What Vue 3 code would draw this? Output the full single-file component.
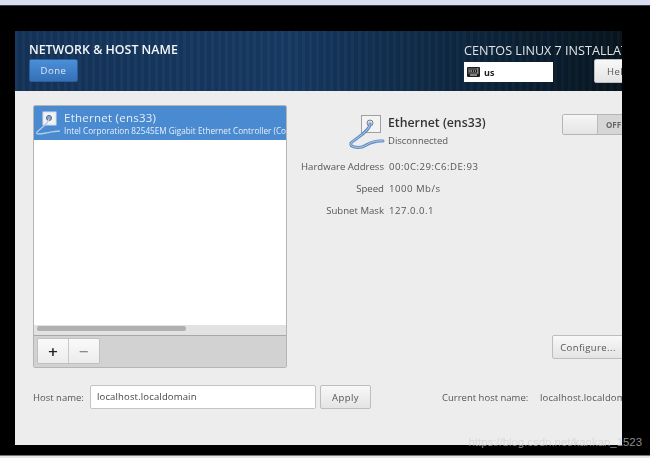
<script setup>
const details = [
  { label: 'Hardware Address', value: '00:0C:29:C6:DE:93' },
  { label: 'Speed', value: '1000 Mb/s' },
  { label: 'Subnet Mask', value: '127.0.0.1' },
]
</script>

<template>
  <div class="screen">
    <div class="top-strip"></div>
    <div class="desktop">
      <section class="window">
        <header class="header">
          <div class="header-left">
            <h1 class="title">NETWORK &amp; HOST NAME</h1>
            <button class="done">Done</button>
          </div>
          <div class="header-right">
            <div class="product">CENTOS LINUX 7 INSTALLATION</div>
            <div class="header-controls">
              <div class="kbd">
                <svg width="13" height="10" viewBox="0 0 13 10" class="kbd-icon">
                  <rect width="13" height="10" rx="1" fill="#1c1c1c" />
                  <path d="M1.5 2h1M3.5 2h1M5.5 2h1M7.5 2h1M9.5 2h2M1.5 4h2M4 4h1M6 4h1M8 4h1M10 4h1.5M1.5 6h1M3.5 6h1M5.5 6h1M7.5 6h1M9.5 6h2M3 8h7" stroke="#e8e8e8" stroke-width="1" />
                </svg>
                <span>us</span>
              </div>
              <button class="btn help">Help!</button>
            </div>
          </div>
        </header>

        <main class="content">
          <div class="columns">
            <div class="panel">
              <div class="row-selected">
                <svg class="row-icon" width="30" height="30" viewBox="0 0 30 30">
                  <rect x="9" y="4" width="13" height="13" fill="#f2f2f2" stroke="#d5deea" stroke-width="1" />
                  <circle cx="15" cy="10" r="2.5" fill="#8fa8c6" stroke="#4d6888" />
                  <path d="M15 11 C14 16 7 20 3 24 C1 27 7 26 12 25 C17 24 21 23 26 23" fill="none" stroke="#b4cbe6" stroke-width="1.3" />
                </svg>
                <div class="row-text">
                  <div class="row-name">Ethernet (ens33)</div>
                  <div class="row-sub">Intel Corporation 82545EM Gigabit Ethernet Controller (Copper)</div>
                </div>
              </div>
              <div class="list-body"></div>
              <div class="scroll"><div class="thumb"></div></div>
              <div class="toolbar">
                <div class="tool-group">
                  <span class="tool plus">+</span>
                  <span class="tool minus">−</span>
                </div>
              </div>
            </div>

            <div class="detail">
              <div class="detail-head">
                <div class="detail-id">
                  <svg class="big-icon" width="40" height="38" viewBox="0 0 40 38">
                    <rect x="13.5" y="1.5" width="19" height="17" fill="#f3f3f3" stroke="#a0a0a0" stroke-width="1" />
                    <circle cx="22" cy="9" r="3" fill="#d5dde6" stroke="#78818c" />
                    <path d="M22 10 C22 17 8 24 3 29 C1 33 9 34 14 33 C20 31 23 26 35 27" fill="none" stroke="#5f8cc4" stroke-width="3" stroke-linecap="round" />
                    <path d="M22 10 C22 17 8 24 3 29 C1 33 9 34 14 33 C20 31 23 26 35 27" fill="none" stroke="#b4cce6" stroke-width="1" stroke-linecap="round" />
                  </svg>
                  <div class="detail-labels">
                    <div class="detail-name">Ethernet (ens33)</div>
                    <div class="detail-state">Disconnected</div>
                  </div>
                </div>
                <div class="toggle"><span class="knob"></span><span class="off">OFF</span></div>
              </div>
              <dl class="facts">
                <template v-for="d in details" :key="d.label">
                  <dt>{{ d.label }}</dt>
                  <dd>{{ d.value }}</dd>
                </template>
              </dl>
              <button class="btn configure">Configure...</button>
            </div>
          </div>

          <div class="host-row">
            <label class="host-label">Host name:</label>
            <div class="host-input">localhost.localdomain</div>
            <button class="btn apply">Apply</button>
            <span class="current">Current host name:</span>
            <span class="current-value">localhost.localdomain</span>
          </div>
        </main>
      </section>
    </div>
    <div class="bottom-strip"></div>
    <div class="watermark">https://blog.csdn.net/kankan_1523</div>
  </div>
</template>

<style>
html, body { margin: 0; background: #000; }
</style>

<style scoped>
.screen {
  position: relative;
  width: 650px;
  height: 458px;
  display: flex;
  flex-direction: column;
  overflow: hidden;
  background: #000;
  font-family: "Open Sans", "Noto Sans", "DejaVu Sans", sans-serif;
  color: #4a4a4a;
}
.top-strip {
  height: 5px;
  background: #d8def0;
  border-bottom: 1px solid #3a3d48;
}
.desktop {
  height: 449px;
  padding: 25px 28px 9px 15px;
  box-sizing: border-box;
  flex: none;
}
.bottom-strip {
  flex: 1;
  background: #e6e6e6;
  border-top: 1px solid #777;
}
.window {
  width: 607px;
  height: 414px;
  overflow: hidden;
  background: #ededed;
  display: flex;
  flex-direction: column;
  filter: blur(0.35px);
}
.header {
  height: 60px;
  flex: none;
  box-sizing: border-box;
  padding: 0 0 0 14px;
  display: flex;
  justify-content: space-between;
  background:
    repeating-linear-gradient(90deg, rgba(255,255,255,.018) 0 3px, rgba(0,0,0,.05) 3px 7px),
    linear-gradient(90deg, #15345a 0%, #173a64 45%, #0f2a45 70%, #07151f 100%);
}
.header-left { width: 200px; }
.title {
  margin: 0;
  padding-top: 10px;
  font-size: 12.4px;
  line-height: 17px;
  font-weight: 600;
  color: #f4f6f8;
  white-space: nowrap;
}
.done {
  display: block;
  margin-top: 1px;
  width: 49px;
  height: 23px;
  padding: 0;
  border: 1px solid #2c5e9c;
  border-radius: 2px;
  background: linear-gradient(#4a8fd8, #3570b8);
  color: #dbe8f6;
  font: 9.5px "Open Sans", sans-serif;
  letter-spacing: .5px;
}
.header-right {
  width: 158px;
  flex: none;
  overflow: hidden;
  padding-top: 11px;
  box-sizing: border-box;
}
.product {
  font-size: 12.6px;
  line-height: 17px;
  color: #dfe4e8;
  white-space: nowrap;
}
.header-controls {
  display: flex;
  align-items: flex-start;
}
.kbd {
  width: 89px;
  height: 20px;
  margin-top: 3px;
  background: #fff;
  display: flex;
  align-items: center;
  gap: 4px;
  padding-left: 3px;
  box-sizing: border-box;
  font-size: 9px;
  font-weight: 700;
  color: #222;
  flex: none;
}
.kbd-icon { flex: none; }
.btn {
  padding: 0;
  border: 1px solid #bdbdbd;
  border-radius: 2px;
  background: linear-gradient(#f8f8f8, #e4e4e4);
  color: #555;
  font: 9.5px "Open Sans", sans-serif;
  letter-spacing: .4px;
}
.help {
  margin-left: 41px;
  width: 50px;
  height: 24px;
  flex: none;
  text-align: left;
  padding-left: 12px;
}
.content {
  flex: 1;
  padding: 14px 0 0 18px;
  min-height: 0;
}
.columns {
  display: flex;
  height: 263px;
}
.panel {
  width: 254px;
  flex: none;
  box-sizing: border-box;
  border: 1px solid #b5b5b5;
  border-radius: 2px;
  display: flex;
  flex-direction: column;
  background: #fff;
  overflow: hidden;
}
.row-selected {
  height: 34px;
  flex: none;
  background: #4a8ad0;
  display: flex;
  color: #e6eff9;
}
.row-icon { margin: 2px 0 0 0; flex: none; }
.row-text { overflow: hidden; white-space: nowrap; }
.row-name {
  font-size: 11.5px;
  line-height: 15px;
  margin-top: 4px;
  letter-spacing: .25px;
}
.row-sub {
  font-size: 8.2px;
  line-height: 10px;
  margin-top: 1px;
}
.list-body { flex: 1; background: #fff; }
.scroll {
  height: 10px;
  flex: none;
  background: #e2e2e2;
  padding: 1px 0 0 3px;
  box-sizing: border-box;
}
.thumb {
  width: 149px;
  height: 5px;
  border-radius: 2px;
  background: #b0b0b0;
}
.toolbar {
  height: 32px;
  flex: none;
  box-sizing: border-box;
  border-top: 1px solid #a8a8a8;
  background: #d2d2d2;
  padding: 2px 0 0 3px;
}
.tool-group {
  display: flex;
  width: 63px;
  height: 26px;
  border: 1px solid #c0c0c0;
  border-radius: 2px;
  box-sizing: border-box;
  overflow: hidden;
}
.tool {
  flex: 1;
  display: flex;
  align-items: center;
  justify-content: center;
  background: linear-gradient(#fafafa, #ececec);
  font-family: "DejaVu Sans", sans-serif;
  font-size: 13px;
}
.plus { color: #222; font-weight: 700; border-right: 1px solid #c8c8c8; }
.minus { color: #777; }
.detail {
  flex: 1;
  min-width: 0;
  display: flex;
  flex-direction: column;
  padding-left: 14px;
}
.detail-head {
  display: flex;
  height: 46px;
  padding-top: 9px;
}
.detail-id {
  display: flex;
  margin-left: 47px;
  width: 214px;
  flex: none;
}
.big-icon { flex: none; }
.detail-labels { margin-top: 1px; }
.detail-name {
  font-size: 12.3px;
  line-height: 16px;
  font-weight: 600;
  color: #333;
  white-space: nowrap;
}
.detail-state {
  font-size: 9.5px;
  line-height: 13px;
  margin-top: 3px;
  color: #555;
}
.toggle {
  width: 70px;
  height: 21px;
  flex: none;
  display: flex;
  border: 1px solid #b5b5b5;
  border-radius: 2px;
  box-sizing: border-box;
  background: #d6d6d6;
}
.knob {
  width: 34px;
  background: linear-gradient(#f6f6f6, #e4e4e4);
  border-right: 1px solid #bbb;
}
.off {
  font-size: 8px;
  font-weight: 700;
  color: #666;
  line-height: 19px;
  padding-left: 8px;
}
.facts {
  margin: -4px 0 0;
  display: grid;
  grid-template-columns: 83px auto;
  grid-auto-rows: 22px;
  column-gap: 5px;
  font-size: 9.6px;
  line-height: 22px;
  color: #555;
  white-space: nowrap;
}
.facts dt { text-align: right; }
.facts dd { margin: 0; letter-spacing: .5px; }
.configure {
  margin: auto 0 9px 251px;
  width: 72px;
  height: 24px;
  flex: none;
}
.host-row {
  display: flex;
  align-items: center;
  height: 24px;
  margin-top: 17px;
  white-space: nowrap;
  font-size: 9.5px;
  color: #555;
}
.host-label { width: 57px; flex: none; }
.host-input {
  width: 226px;
  height: 24px;
  flex: none;
  box-sizing: border-box;
  border: 1px solid #c4c4c4;
  border-radius: 2px;
  background: #fff;
  padding-left: 6px;
  line-height: 22px;
  color: #444;
  letter-spacing: .15px;
}
.apply { margin-left: 4px; width: 51px; height: 24px; flex: none; }
.current { margin-left: 71px; width: 98px; flex: none; }
.current-value { flex: none; letter-spacing: .15px; }
.watermark {
  position: absolute;
  right: 8px;
  top: 436px;
  font: 11.4px "Liberation Sans", sans-serif;
  color: rgba(205, 205, 205, .7);
}
</style>
